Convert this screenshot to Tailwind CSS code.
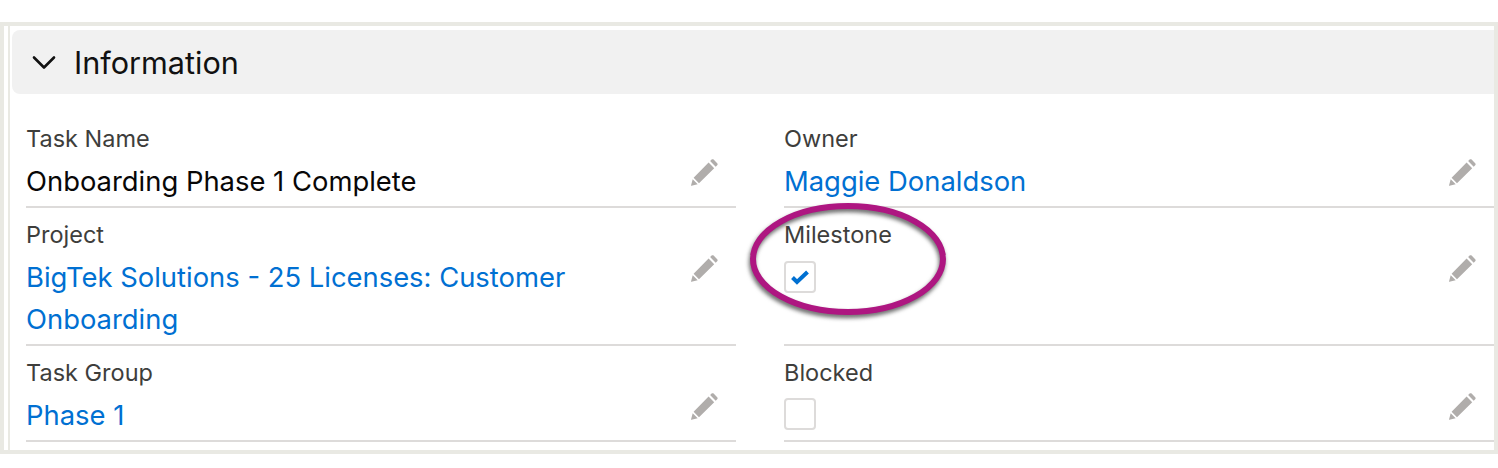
<!DOCTYPE html>
<html lang="en">
<head>
    <meta charset="UTF-8">
    <title>Information</title>
    <script src="https://cdn.jsdelivr.net/npm/@tailwindcss/browser@4"></script>
</head>
<body class="bg-white h-[468px] w-[1498px] overflow-hidden relative font-['Inter','Liberation_Sans',sans-serif]">
    <svg class="hidden">
        <symbol id="pencil" viewBox="0 0 28 28">
            <path fill="#b0adab" d="M22.6 1.6l3.6 3.6c.6.6.6 1.4 0 2l-1.5 1.5-5.6-5.6 1.5-1.5c.6-.6 1.4-.6 2 0zM17.6 4.6l5.6 5.6L8 25.2 2.6 19.8z M1.7 21.2l5 5-6.3 1.6c-.3.1-.5-.1-.4-.4z"/>
        </symbol>
    </svg>

    <div class="pt-[22px]">
        <div class="h-[432px] border-4 border-[#e9e9e3] pl-1">
            <div class="h-full border-l-2 border-[#e9e9e3] pl-[2px] pt-1">
                <!-- Section header -->
                <div class="h-16 bg-[#f1f1f1] rounded-l-lg flex items-center pl-[20px] gap-[18px]">
                    <svg class="w-6 h-6" viewBox="0 0 24 24" fill="none" stroke="#111" stroke-width="2.6" stroke-linecap="round" stroke-linejoin="round"><path d="M2 7.5l10 10 10-10"/></svg>
                    <span class="text-[30.6px] leading-none text-[#111] mt-[2px]">Information</span>
                </div>

                <!-- Fields -->
                <div class="grid grid-cols-[710px_710px] gap-x-[48px] pl-[14px] pt-[30px]">
                    <div class="h-[84px] border-b-2 border-[#dddbda] relative">
                        <div class="text-[23.5px] leading-[30px] text-[#3e3e3c]">Task Name</div>
                        <div class="text-[27.4px] leading-[42px] mt-[6px] text-[#080707]">Onboarding Phase 1 Complete</div>
                        <svg class="w-7 h-7 absolute right-[17px] top-[34px]"><use href="#pencil"/></svg>
                    </div>
                    <div class="h-[84px] border-b-2 border-[#dddbda] relative">
                        <div class="text-[23.5px] leading-[30px] text-[#3e3e3c]">Owner</div>
                        <div class="text-[27.4px] leading-[42px] mt-[6px] text-[#0070d2]">Maggie Donaldson</div>
                        <svg class="w-7 h-7 absolute right-[17px] top-[34px]"><use href="#pencil"/></svg>
                    </div>

                    <div class="h-[138px] border-b-2 border-[#dddbda] relative pt-3">
                        <div class="text-[23.5px] leading-[30px] text-[#3e3e3c]">Project</div>
                        <div class="text-[27.4px] leading-[42px] mt-[6px] text-[#0070d2]">BigTek Solutions - 25 Licenses: Customer<br>Onboarding</div>
                        <svg class="w-7 h-7 absolute right-[17px] top-[46px]"><use href="#pencil"/></svg>
                    </div>
                    <div class="h-[138px] border-b-2 border-[#dddbda] relative pt-3">
                        <div class="text-[23.5px] leading-[30px] text-[#3e3e3c]">Milestone</div>
                        <div class="mt-[11px] w-8 h-8 border-2 border-[#dddbda] rounded-[4px] bg-white flex items-center justify-center">
                            <svg class="w-[18px] h-[18px]" viewBox="0 0 18 18"><path fill="none" stroke="#0070d2" stroke-width="4" d="M1.5 9.5l4.5 4.5L16.5 4"/></svg>
                        </div>
                        <svg class="w-7 h-7 absolute right-[17px] top-[46px]"><use href="#pencil"/></svg>
                    </div>

                    <div class="h-[96px] border-b-2 border-[#dddbda] relative pt-3">
                        <div class="text-[23.5px] leading-[30px] text-[#3e3e3c]">Task Group</div>
                        <div class="text-[27.4px] leading-[42px] mt-[6px] text-[#0070d2]">Phase 1</div>
                        <svg class="w-7 h-7 absolute right-[17px] top-[46px]"><use href="#pencil"/></svg>
                    </div>
                    <div class="h-[96px] border-b-2 border-[#dddbda] relative pt-3">
                        <div class="text-[23.5px] leading-[30px] text-[#3e3e3c]">Blocked</div>
                        <div class="mt-[10px] w-8 h-8 border-2 border-[#dddbda] rounded-[4px] bg-white"></div>
                        <svg class="w-7 h-7 absolute right-[17px] top-[46px]"><use href="#pencil"/></svg>
                    </div>
                </div>
            </div>
        </div>
    </div>

    <!-- Callout ellipse around Milestone -->
    <svg class="absolute left-0 top-0 pointer-events-none" width="1498" height="468">
        <defs>
            <filter id="callout-shadow" x="-20%" y="-30%" width="140%" height="160%" color-interpolation-filters="sRGB">
                <feDropShadow dx="-1" dy="3" stdDeviation="2" flood-color="#333" flood-opacity="0.75"/>
            </filter>
        </defs>
        <ellipse cx="848" cy="259" rx="95" ry="53" fill="none" stroke="#ae1681" stroke-width="6" filter="url(#callout-shadow)"/>
    </svg>
</body>
</html>
